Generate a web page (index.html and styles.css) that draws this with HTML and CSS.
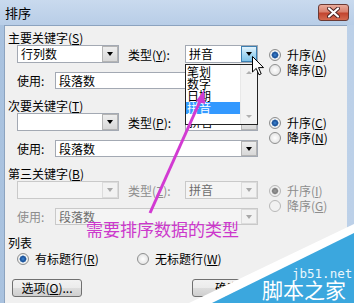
FILE: index.html
```html
<!DOCTYPE html>
<html lang="zh">
<head>
<meta charset="utf-8">
<link rel="stylesheet" href="styles.css">
</head>
<body>
<div class="window">
  <div class="titlebar">
    <span class="title">排序</span>
    <div class="close">
      <svg width="13" height="11" viewBox="0 0 13 11"><path d="M2 1.5 L11 9.5 M11 1.5 L2 9.5" stroke="#4a2222" stroke-width="4" stroke-linecap="round"/><path d="M2 1.5 L11 9.5 M11 1.5 L2 9.5" stroke="#fff" stroke-width="2.2" stroke-linecap="round"/></svg>
    </div>
  </div>
  <div class="client">
    <div class="group">
      <div class="glabel">主要关键字(<u>S</u>)</div>
      <div class="gbody">
        <div class="fields">
          <div class="row1">
            <div class="combo key"><span class="val">行列数</span><span class="btn"><i class="arrow"></i></span></div>
            <span class="tlabel">类型(<u>Y</u>):</span>
            <div class="combo type"><span class="val">拼音</span><span class="btn hot"><i class="arrow"></i></span>
              <div class="list">
                <div class="item">笔划</div>
                <div class="item">数字</div>
                <div class="item">日期</div>
                <div class="item sel">拼音</div>
                <div class="scroll"><i class="up"></i><i class="down"></i></div>
              </div>
            </div>
          </div>
          <div class="row2">
            <span class="ulabel">使用:</span>
            <div class="combo use"><span class="val">段落数</span><span class="btn"><i class="arrow"></i></span></div>
          </div>
        </div>
        <div class="radios">
          <div class="radio checked"><span class="dot"></span>升序(<u>A</u>)</div>
          <div class="radio"><span class="dot"></span>降序(<u>D</u>)</div>
        </div>
      </div>
    </div>

    <div class="group">
      <div class="glabel">次要关键字(<u>T</u>)</div>
      <div class="gbody">
        <div class="fields">
          <div class="row1">
            <div class="combo key"><span class="val"></span><span class="btn"><i class="arrow"></i></span></div>
            <span class="tlabel">类型(<u>P</u>):</span>
            <div class="combo type"><span class="val">拼音</span><span class="btn"><i class="arrow"></i></span></div>
          </div>
          <div class="row2">
            <span class="ulabel">使用:</span>
            <div class="combo use"><span class="val">段落数</span><span class="btn"><i class="arrow"></i></span></div>
          </div>
        </div>
        <div class="radios">
          <div class="radio checked"><span class="dot"></span>升序(<u>C</u>)</div>
          <div class="radio"><span class="dot"></span>降序(<u>N</u>)</div>
        </div>
      </div>
    </div>

    <div class="group disabled">
      <div class="glabel">第三关键字(<u>B</u>)</div>
      <div class="gbody">
        <div class="fields">
          <div class="row1">
            <div class="combo key"><span class="val"></span><span class="btn"><i class="arrow"></i></span></div>
            <span class="tlabel">类型(<u>Z</u>):</span>
            <div class="combo type"><span class="val">拼音</span><span class="btn"><i class="arrow"></i></span></div>
          </div>
          <div class="row2">
            <span class="ulabel">使用:</span>
            <div class="combo use"><span class="val">段落数</span><span class="btn"><i class="arrow"></i></span></div>
          </div>
        </div>
        <div class="radios">
          <div class="radio checked"><span class="dot"></span>升序(<u>I</u>)</div>
          <div class="radio"><span class="dot"></span>降序(<u>G</u>)</div>
        </div>
      </div>
    </div>

    <div class="glabel listlabel">列表</div>
    <div class="radio-row">
      <div class="radio checked wide"><span class="dot"></span>有标题行(<u>R</u>)</div>
      <div class="radio"><span class="dot"></span>无标题行(<u>W</u>)</div>
    </div>
    <div class="buttons">
      <div class="button">选项(<u>O</u>)...</div>
      <div class="button ok">确定</div>
    </div>
  </div>

  <svg class="cursor" width="13" height="20" viewBox="0 0 13 20"><path d="M0.5 0.5 L0.5 16 L4.2 12.4 L7 18.8 L9.2 17.8 L6.5 11.6 L11.5 11.6 Z" fill="#fff" stroke="#000" stroke-width="1"/></svg>

  <svg class="annot" width="354" height="303" viewBox="0 0 354 303">
    <line x1="150" y1="213" x2="201" y2="99" stroke="#d23ad2" stroke-width="3"/>
    <path d="M204 90 L196 101 L205 104 Z" fill="#d23ad2"/>
  </svg>
  <div class="note">需要排序数据的类型</div>

  <svg class="mark" width="354" height="303" viewBox="0 0 354 303">
    <polygon points="354,224 354,234 213,303 189,303" fill="#ffffff"/>
    <polygon points="354,233 354,303 212,303" fill="#3ba7de"/>
  </svg>
  <div class="mark-url">jb51.net</div>
  <div class="mark-name">脚本之家</div>
</div>
</body>
</html>
```

FILE: styles.css
```css
html, body {
  margin: 0;
  padding: 0;
  background: #fff;
}
body {
  font-family: "Noto Sans CJK SC", "Liberation Sans", sans-serif;
  font-size: 12px;
  color: #000;
}
u { text-decoration: underline; text-underline-offset: 1px; }

.window {
  position: relative;
  width: 354px;
  height: 303px;
  overflow: hidden;
  background: linear-gradient(90deg, #a9c2df 0, #c3d6ec 40%, #bcd0e8 100%);
}
.titlebar {
  height: 25px;
  display: flex;
  align-items: center;
  padding-left: 5px;
  box-sizing: border-box;
  background: linear-gradient(180deg, #c9daee 0, #b8cde7 100%);
}
.title {
  font-size: 13px;
  line-height: 14px;
  color: #000;
}
.close {
  margin-left: auto;
  margin-right: 5px;
  width: 31px;
  height: 17px;
  box-sizing: border-box;
  border: 1px solid #6b3a34;
  border-radius: 3px;
  background: linear-gradient(180deg, #e9ab9c 0, #d9816e 45%, #c2452f 55%, #d46a4f 100%);
  display: flex;
  align-items: center;
  justify-content: center;
}

.client {
  margin-left: 4px;
  width: 343px;
  height: 278px;
  box-sizing: border-box;
  background: #f0f0f0;
  border-left: 1px solid #8ca3bf;
  border-top: 1px solid #8ca3bf;
  padding: 5px 0 0 3px;
}

.group { height: 68px; }
.glabel {
  height: 13px;
  line-height: 13px;
  white-space: nowrap;
}
.gbody {
  display: flex;
  padding-left: 9px;
  margin-top: 1px;
}
.fields { width: 241px; }
.row1 {
  display: flex;
  align-items: center;
  height: 18px;
}
.row2 {
  display: flex;
  align-items: center;
  height: 17px;
  margin-top: 9px;
}
.tlabel {
  width: 57px;
  margin-left: 9px;
  white-space: nowrap;
}
.ulabel {
  width: 38px;
  white-space: nowrap;
}

.combo {
  position: relative;
  display: flex;
  height: 18px;
  box-sizing: border-box;
  border: 1px solid #a3a9b3;
  background: #fff;
}
.combo.key { width: 102px; }
.combo.type { width: 73px; }
.combo.use { width: 203px; height: 17px; }
.val {
  flex: 1;
  padding-left: 3px;
  line-height: 16px;
  white-space: nowrap;
  overflow: hidden;
}
.btn {
  width: 16px;
  box-sizing: border-box;
  border: 1px solid #b4b4b4;
  background: linear-gradient(180deg, #eeeeee 0, #d8d8d8 100%);
  display: flex;
  align-items: center;
  justify-content: center;
}
.btn.hot {
  border: 1px solid #3c7fb1;
  background: linear-gradient(180deg, #e3f3fc 0, #a9daf4 50%, #7fc2e8 100%);
}
.arrow {
  width: 0;
  height: 0;
  border-left: 3.5px solid transparent;
  border-right: 3.5px solid transparent;
  border-top: 4px solid #000;
}

.list {
  position: absolute;
  left: -1px;
  top: 18px;
  width: 73px;
  height: 61px;
  box-sizing: border-box;
  border: 1px solid #222;
  background: #fff;
  padding-top: 1px;
  z-index: 3;
}
.item {
  width: 55px;
  height: 12px;
  line-height: 12px;
  font-size: 12px;
  padding-left: 1px;
  box-sizing: border-box;
  white-space: nowrap;
}
.item.sel {
  background: #3399ff;
  color: #fff;
}
.scroll {
  position: absolute;
  right: 0;
  top: 0;
  bottom: 0;
  width: 16px;
  background: #f3f3f3;
  border-left: 1px solid #e8e8e8;
}
.scroll i {
  position: absolute;
  left: 5px;
  width: 0;
  height: 0;
  border-left: 3px solid transparent;
  border-right: 3px solid transparent;
}
.scroll .up { top: 6px; border-bottom: 3px solid #b0b0b0; }
.scroll .down { bottom: 6px; border-top: 3px solid #b0b0b0; }

.radios {
  margin-left: 11px;
  padding-top: 2px;
}
.radio {
  display: flex;
  align-items: center;
  height: 15px;
  white-space: nowrap;
}
.dot {
  width: 12px;
  height: 12px;
  box-sizing: border-box;
  border-radius: 50%;
  border: 1px solid #8e8f8f;
  background: radial-gradient(circle, #ffffff 0, #e6e6e6 70%, #d3d3d3 100%);
  margin-right: 6px;
}
.radio.checked .dot {
  background: radial-gradient(circle, #3b86d4 0, #1b4f96 2.5px, #5d8fc4 3.3px, #f4f4f4 3.8px, #d9d9d9 100%);
}

.disabled .row1, .disabled .row2, .disabled .radios { color: #8d8d8d; }
.disabled .combo { background: #f4f4f4; border-color: #c9c9c9; }
.disabled .val { color: #6d6d6d; }
.disabled .btn { border-color: #dcdcdc; background: #f2f2f2; }
.disabled .arrow { border-top-color: #a8a8a8; }
.disabled .dot { border-color: #b8b8b8; background: #f2f2f2; }
.disabled .radio.checked .dot {
  background: radial-gradient(circle, #9a9a9a 0, #7d7d7d 2.5px, #f2f2f2 3.8px, #e6e6e6 100%);
}

.listlabel { margin-top: 1px; }
.radio-row {
  display: flex;
  padding-left: 9px;
  margin-top: 2px;
}
.radio.wide { width: 120px; }

.buttons {
  display: flex;
  padding-left: 4px;
  margin-top: 13px;
}
.button {
  width: 70px;
  height: 18px;
  box-sizing: border-box;
  border: 1px solid #707070;
  border-radius: 3px;
  background: linear-gradient(180deg, #f2f2f2 0, #ebebeb 50%, #dddddd 51%, #cfcfcf 100%);
  text-align: center;
  line-height: 16px;
  white-space: nowrap;
}
.button.ok { margin-left: 110px; }

.cursor {
  position: absolute;
  left: 252px;
  top: 56px;
  z-index: 6;
}
.annot {
  position: absolute;
  left: 0;
  top: 0;
  z-index: 7;
}
.note {
  position: absolute;
  left: 86px;
  top: 220px;
  font-size: 17px;
  line-height: 18px;
  color: #cc38cc;
  white-space: nowrap;
  z-index: 8;
}
.mark {
  position: absolute;
  left: 0;
  top: 0;
  z-index: 9;
}
.mark-url {
  position: absolute;
  left: 292px;
  top: 268px;
  font-family: "DejaVu Sans Mono", monospace;
  font-size: 12.5px;
  line-height: 12px;
  color: #eaf6fc;
  z-index: 10;
}
.mark-name {
  position: absolute;
  left: 262px;
  top: 279px;
  font-size: 21px;
  line-height: 20px;
  color: #fff;
  white-space: nowrap;
  z-index: 10;
}
```
